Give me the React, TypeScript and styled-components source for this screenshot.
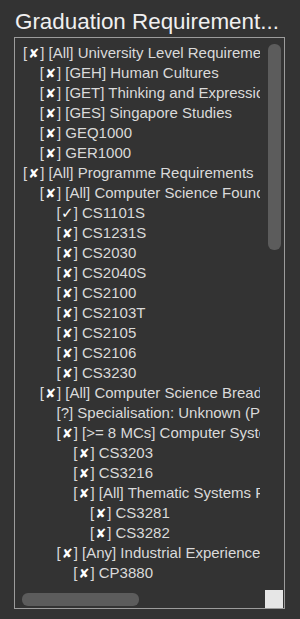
import React from "react";
import styled, { createGlobalStyle } from "styled-components";

type Status = "fail" | "pass" | "unknown";

interface Node {
  depth: number;
  status: Status;
  label: string;
}

const tree: Node[] = [
  { depth: 0, status: "fail", label: "[All] University Level Requirements" },
  { depth: 1, status: "fail", label: "[GEH] Human Cultures" },
  { depth: 1, status: "fail", label: "[GET] Thinking and Expression" },
  { depth: 1, status: "fail", label: "[GES] Singapore Studies" },
  { depth: 1, status: "fail", label: "GEQ1000" },
  { depth: 1, status: "fail", label: "GER1000" },
  { depth: 0, status: "fail", label: "[All] Programme Requirements" },
  { depth: 1, status: "fail", label: "[All] Computer Science Foundation" },
  { depth: 2, status: "pass", label: "CS1101S" },
  { depth: 2, status: "fail", label: "CS1231S" },
  { depth: 2, status: "fail", label: "CS2030" },
  { depth: 2, status: "fail", label: "CS2040S" },
  { depth: 2, status: "fail", label: "CS2100" },
  { depth: 2, status: "fail", label: "CS2103T" },
  { depth: 2, status: "fail", label: "CS2105" },
  { depth: 2, status: "fail", label: "CS2106" },
  { depth: 2, status: "fail", label: "CS3230" },
  { depth: 1, status: "fail", label: "[All] Computer Science Breadth and Depth" },
  { depth: 2, status: "unknown", label: "Specialisation: Unknown (Please select one)" },
  { depth: 2, status: "fail", label: "[>= 8 MCs] Computer Systems Team Project" },
  { depth: 3, status: "fail", label: "CS3203" },
  { depth: 3, status: "fail", label: "CS3216" },
  { depth: 3, status: "fail", label: "[All] Thematic Systems Project" },
  { depth: 4, status: "fail", label: "CS3281" },
  { depth: 4, status: "fail", label: "CS3282" },
  { depth: 2, status: "fail", label: "[Any] Industrial Experience Requirement" },
  { depth: 3, status: "fail", label: "CP3880" },
];

// scroll position of the tree view, as shown
const view = { top: 6, height: 206, left: 7, width: 117 };

const GlobalStyle = createGlobalStyle`
  html, body {
    margin: 0;
    padding: 0;
    background: #333333;
  }
  body {
    font-family: "Liberation Sans", Arial, sans-serif;
  }
`;

const Page = styled.div`
  display: flex;
  flex-direction: column;
  width: 300px;
  height: 619px;
  box-sizing: border-box;
  padding: 8px 15px 10px 14px;
  background: #333333;
`;

const Title = styled.h1`
  margin: 0 0 1px 1px;
  font-size: 22.4px;
  line-height: 28px;
  font-weight: normal;
  color: #f0f0f0;
  white-space: nowrap;
`;

const Panel = styled.div`
  flex: 1;
  min-height: 0;
  display: grid;
  grid-template-columns: 1fr 24px;
  grid-template-rows: 1fr 18px;
  border: 1px solid #9c9c9c;
  background: #333333;
`;

const Viewport = styled.div`
  overflow: hidden;
  min-width: 0;
  min-height: 0;
`;

const List = styled.div`
  padding: 5px 0 8px;
`;

const Row = styled.div<{ $depth: number }>`
  padding-left: ${(p) => 8 + p.$depth * 16.75}px;
  font-size: 15px;
  line-height: 20px;
  height: 20px;
  color: #dadada;
  white-space: nowrap;
`;

const Glyph = styled.span<{ $heavy?: boolean }>`
  display: inline-block;
  width: 13px;
  text-align: center;
  line-height: 1;
  font-family: "DejaVu Sans", sans-serif;
  font-size: ${(p) => (p.$heavy ? 13 : 15)}px;
  font-weight: ${(p) => (p.$heavy ? "bold" : "normal")};
  color: #ffffff;
`;

const VTrack = styled.div`
  padding: 0 3px 0 8px;
`;

const HTrack = styled.div`
  padding: 3px 0 2px 0;
`;

const Thumb = styled.div`
  background: #5c5c5c;
  border-radius: 6px;
`;

const Corner = styled.div`
  margin: 0 1px 0 5px;
  background: #e6e6e6;
`;

const Marker = ({ status }: { status: Status }) => {
  if (status === "unknown") return <span>[?]</span>;
  return (
    <span>
      [<Glyph $heavy={status === "fail"}>{status === "fail" ? "✘" : "✓"}</Glyph>]
    </span>
  );
};

export default function App() {
  return (
    <>
      <GlobalStyle />
      <Page>
        <Title>Graduation Requirement...</Title>
        <Panel>
          <Viewport>
            <List>
              {tree.map((node, i) => (
                <Row key={i} $depth={node.depth}>
                  <Marker status={node.status} /> {node.label}
                </Row>
              ))}
            </List>
          </Viewport>
          <VTrack>
            <Thumb style={{ marginTop: view.top, height: view.height }} />
          </VTrack>
          <HTrack>
            <Thumb style={{ marginLeft: view.left, width: view.width, height: "100%" }} />
          </HTrack>
          <Corner />
        </Panel>
      </Page>
    </>
  );
}
